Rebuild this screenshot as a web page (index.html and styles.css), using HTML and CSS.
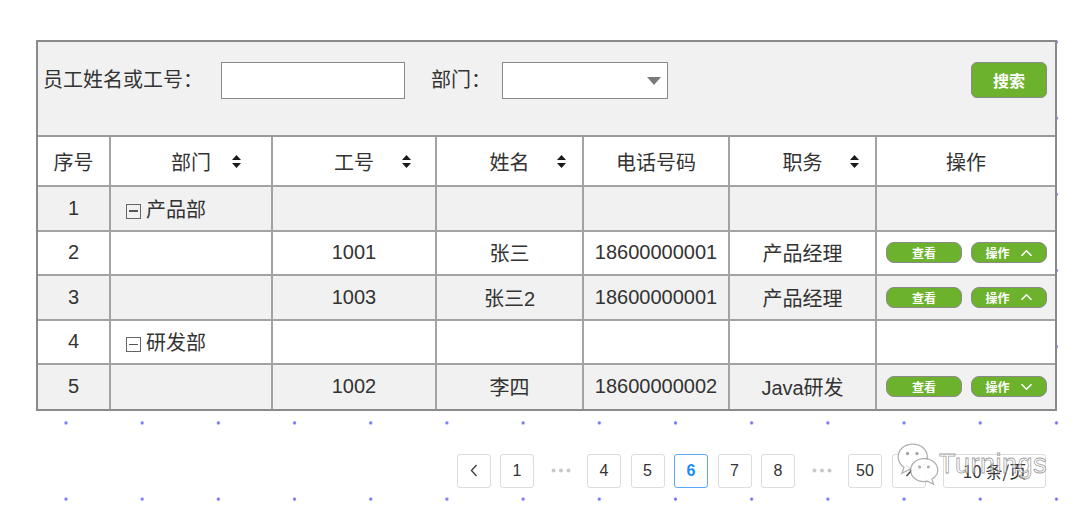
FILE: index.html
```html
<!DOCTYPE html>
<html lang="zh-CN">
<head>
    <meta charset="UTF-8">
    <title>员工列表</title>
    <link rel="stylesheet" href="styles.css">
</head>
<body>

    <div class="page">
        <div class="panel">
            <!-- 搜索条件 -->
            <div class="search">
                <span class="field-label">员工姓名或工号：</span>
                <input class="text-input" type="text">
                <span class="field-label dept-label">部门：</span>
                <div class="select">
                    <svg class="caret" width="14" height="8" viewBox="0 0 14 8"><path d="M0 0 H14 L7 8 Z" fill="#7a7a7a"/></svg>
                </div>
                <button class="btn-search">搜索</button>
            </div>

            <!-- 员工表格 -->
            <table class="grid">
                <colgroup>
                    <col class="c-no">
                    <col class="c-dept">
                    <col class="c-id">
                    <col class="c-name">
                    <col class="c-phone">
                    <col class="c-job">
                    <col class="c-op">
                </colgroup>
                <thead>
                    <tr>
                        <th>序号</th>
                        <th class="sortable">部门<svg class="sort sort-dept" width="9" height="13" viewBox="0 0 9 13"><path d="M4.5 0 L9 5 H0 Z M0 8 H9 L4.5 13 Z" fill="#1a1a1a"/></svg></th>
                        <th class="sortable">工号<svg class="sort sort-id" width="9" height="13" viewBox="0 0 9 13"><path d="M4.5 0 L9 5 H0 Z M0 8 H9 L4.5 13 Z" fill="#1a1a1a"/></svg></th>
                        <th class="sortable">姓名<svg class="sort sort-name" width="9" height="13" viewBox="0 0 9 13"><path d="M4.5 0 L9 5 H0 Z M0 8 H9 L4.5 13 Z" fill="#1a1a1a"/></svg></th>
                        <th>电话号码</th>
                        <th class="sortable">职务<svg class="sort sort-job" width="9" height="13" viewBox="0 0 9 13"><path d="M4.5 0 L9 5 H0 Z M0 8 H9 L4.5 13 Z" fill="#1a1a1a"/></svg></th>
                        <th>操作</th>
                    </tr>
                </thead>
                <tbody>
                    <tr class="odd">
                        <td>1</td>
                        <td class="dept"><span class="fold"></span>产品部</td>
                        <td></td><td></td><td></td><td></td><td></td>
                    </tr>
                    <tr>
                        <td>2</td>
                        <td></td>
                        <td>1001</td>
                        <td>张三</td>
                        <td>18600000001</td>
                        <td>产品经理</td>
                        <td class="ops">
                            <button class="btn-sm">查看</button>
                            <button class="btn-sm">操作<svg class="chev" width="13" height="8" viewBox="0 0 13 8"><path d="M1.5 6.8 L6.5 1.8 L11.5 6.8" fill="none" stroke="#fff" stroke-width="1.6"/></svg></button>
                        </td>
                    </tr>
                    <tr class="odd">
                        <td>3</td>
                        <td></td>
                        <td>1003</td>
                        <td>张三2</td>
                        <td>18600000001</td>
                        <td>产品经理</td>
                        <td class="ops">
                            <button class="btn-sm">查看</button>
                            <button class="btn-sm">操作<svg class="chev" width="13" height="8" viewBox="0 0 13 8"><path d="M1.5 6.8 L6.5 1.8 L11.5 6.8" fill="none" stroke="#fff" stroke-width="1.6"/></svg></button>
                        </td>
                    </tr>
                    <tr>
                        <td>4</td>
                        <td class="dept"><span class="fold"></span>研发部</td>
                        <td></td><td></td><td></td><td></td><td></td>
                    </tr>
                    <tr class="odd">
                        <td>5</td>
                        <td></td>
                        <td>1002</td>
                        <td>李四</td>
                        <td>18600000002</td>
                        <td>Java研发</td>
                        <td class="ops">
                            <button class="btn-sm">查看</button>
                            <button class="btn-sm">操作<svg class="chev" width="13" height="8" viewBox="0 0 13 8"><path d="M1.5 1.2 L6.5 6.2 L11.5 1.2" fill="none" stroke="#fff" stroke-width="1.6"/></svg></button>
                        </td>
                    </tr>
                </tbody>
            </table>
        </div>

        <!-- 分页 -->
        <div class="pager">
            <span class="pg-item"><svg width="8" height="13" viewBox="0 0 8 13"><path d="M6.5 1 L1.5 6.5 L6.5 12" fill="none" stroke="#444" stroke-width="1.4"/></svg></span>
            <span class="pg-item">1</span>
            <span class="pg-more"><svg width="20" height="5" viewBox="0 0 20 5"><circle cx="2.5" cy="2.5" r="2" fill="#c8c8c8"/><circle cx="10" cy="2.5" r="2" fill="#c8c8c8"/><circle cx="17.5" cy="2.5" r="2" fill="#c8c8c8"/></svg></span>
            <span class="pg-item">4</span>
            <span class="pg-item">5</span>
            <span class="pg-item active">6</span>
            <span class="pg-item">7</span>
            <span class="pg-item">8</span>
            <span class="pg-more"><svg width="20" height="5" viewBox="0 0 20 5"><circle cx="2.5" cy="2.5" r="2" fill="#c8c8c8"/><circle cx="10" cy="2.5" r="2" fill="#c8c8c8"/><circle cx="17.5" cy="2.5" r="2" fill="#c8c8c8"/></svg></span>
            <span class="pg-item">50</span>
            <span class="pg-item"><svg width="8" height="13" viewBox="0 0 8 13"><path d="M1.5 1 L6.5 6.5 L1.5 12" fill="none" stroke="#444" stroke-width="1.4"/></svg></span>
            <span class="pg-size">10 条/页</span>

            <!-- 水印 -->
            <div class="watermark">
                <svg width="46" height="50" viewBox="0 0 44 48">
                    <path d="M16 2 C7.5 2 2 7.8 2 14.5 C2 18.6 4.2 22 7.6 24.3 L5.6 30 L12.4 26.6 C13.6 26.9 14.8 27 16 27 C24.5 27 30 21.2 30 14.5 C30 7.8 24.5 2 16 2 Z" fill="rgba(255,255,255,0.85)" stroke="rgba(110,110,110,0.55)" stroke-width="1.2"/>
                    <circle cx="11" cy="11" r="1.6" fill="rgba(110,110,110,0.6)"/>
                    <circle cx="20" cy="11" r="1.6" fill="rgba(110,110,110,0.6)"/>
                    <path d="M27 16 C19.5 16 14 21 14 27 C14 33 19.5 38 27 38 C28 38 29.2 37.9 30.2 37.6 L36 40.6 L34.4 35.6 C37.6 33.6 40 30.5 40 27 C40 21 34.5 16 27 16 Z" fill="rgba(255,255,255,0.88)" stroke="rgba(110,110,110,0.55)" stroke-width="1.2"/>
                    <circle cx="22.5" cy="24" r="1.4" fill="rgba(110,110,110,0.6)"/>
                    <circle cx="31" cy="24" r="1.4" fill="rgba(110,110,110,0.6)"/>
                </svg>
                <span class="wm-text">Turnings</span>
            </div>
        </div>
    </div>

</body>
</html>
```

FILE: styles.css
```css
* {
    margin: 0;
    padding: 0;
    box-sizing: border-box;
}

html, body {
    width: 1080px;
    height: 512px;
}

body {
    overflow: hidden;
    color: #333;
    font-family: "Liberation Sans", "Noto Sans CJK SC", sans-serif;
    background-color: #fff;
    /* 点阵背景 */
    background-image: radial-gradient(circle, #6c6cf6 0, #6c6cf6 1px, rgba(108, 108, 246, 0.35) 1.6px, transparent 2.2px);
    background-size: 76.2px 76.2px;
    background-position: 27.9px 3.9px;
}

.page {
    padding: 40px 0 0 36px;
    width: 1057px;
}

.panel {
    width: 1021px;
    border: 2px solid #8a8a8a;
    background: #fff;
}

/* 搜索区域 */
.search {
    display: flex;
    align-items: flex-start;
    height: 95px;
    padding: 20px 8px 0 5px;
    background: #f1f1f1;
    border-bottom: 2px solid #999;
}

.field-label {
    font-size: 20px;
    line-height: 37px;
    color: #333;
    white-space: nowrap;
}

.text-input {
    width: 184px;
    height: 37px;
    margin-left: 18px;
    border: 1.5px solid #8a8a8a;
    background: #fff;
}

.dept-label {
    margin-left: 26px;
}

.select {
    display: flex;
    align-items: center;
    justify-content: flex-end;
    width: 166px;
    height: 37px;
    margin-left: 11px;
    padding-right: 6px;
    border: 1.5px solid #8a8a8a;
    background: #fff;
}

.btn-search {
    margin-left: auto;
    width: 76px;
    height: 36px;
    border: 1.5px solid #8a8a8a;
    border-radius: 6px;
    background: #6cb22c;
    color: #fff;
    font-family: "Noto Sans CJK SC", sans-serif;
    font-size: 16px;
    font-weight: bold;
}

/* 表格 */
.grid {
    width: 1017px;
    border-collapse: collapse;
    border-style: hidden;
    table-layout: fixed;
    font-size: 20px;
}

.c-no { width: 72px; }
.c-dept { width: 162px; }
.c-id { width: 164px; }
.c-name { width: 147px; }
.c-phone { width: 146px; }
.c-job { width: 147px; }
.c-op { width: 179px; }

.grid th, .grid td {
    border: 2px solid #a3a3a3;
    text-align: center;
    font-weight: normal;
    color: #333;
    white-space: nowrap;
}

.grid thead tr {
    height: 49px;
}

.grid tbody tr {
    height: 44.5px;
}

.grid tr.odd td {
    background: #f1f1f1;
}

.sortable {
    position: relative;
}

.sort {
    position: absolute;
    top: 50%;
    margin-top: -6px;
}

.sort-dept { right: 30px; }
.sort-id { right: 24px; }
.sort-name { right: 16px; }
.sort-job { right: 16px; }

.grid td.dept {
    text-align: left;
    padding-left: 15px;
}

.fold {
    display: inline-block;
    position: relative;
    width: 15px;
    height: 15px;
    margin-right: 5px;
    vertical-align: -2px;
    border: 1.2px solid #666;
}

.fold::after {
    content: "";
    position: absolute;
    left: 2px;
    right: 2px;
    top: 5.5px;
    height: 1.4px;
    background: #555;
}

.grid td.ops {
    text-align: left;
    padding-left: 9px;
    font-size: 0;
}

.btn-sm {
    display: inline-flex;
    align-items: center;
    justify-content: center;
    width: 76px;
    height: 21px;
    margin-right: 9px;
    border: 1.5px solid #8a8a8a;
    border-radius: 8px;
    background: #6cb22c;
    color: #fff;
    font-family: "Noto Sans CJK SC", sans-serif;
    font-size: 12px;
    font-weight: bold;
    vertical-align: middle;
}

.btn-sm:last-child {
    margin-right: 0;
}

.chev {
    margin-left: 10px;
}

/* 分页 */
.pager {
    position: relative;
    display: flex;
    justify-content: flex-end;
    align-items: center;
    gap: 9.5px;
    width: 1021px;
    margin-top: 43px;
    padding-right: 11px;
}

.pg-item, .pg-more {
    display: flex;
    align-items: center;
    justify-content: center;
    width: 34px;
    height: 34px;
    font-size: 16px;
    color: #333;
}

.pg-item {
    border: 1px solid #dcdcdc;
    border-radius: 3px;
    background: #fff;
}

.pg-item.active {
    border-color: #5ba8f7;
    color: #1e8cf5;
    font-weight: bold;
}

.pg-size {
    display: flex;
    align-items: center;
    justify-content: center;
    width: 103px;
    height: 34px;
    margin-left: 8px;
    border: 1px solid #dcdcdc;
    border-radius: 3px;
    background: #fff;
    font-family: "Noto Sans CJK SC", sans-serif;
    font-size: 17px;
    color: #333;
}

.watermark {
    position: absolute;
    right: 10px;
    top: -12px;
    display: flex;
    align-items: center;
}

.wm-text {
    margin-left: -3px;
    margin-top: -4px;
    font-family: "Liberation Sans", sans-serif;
    font-size: 27px;
    letter-spacing: 0.5px;
    color: rgba(255, 255, 255, 0.55);
    -webkit-text-stroke: 0.8px rgba(90, 90, 90, 0.6);
}
```
